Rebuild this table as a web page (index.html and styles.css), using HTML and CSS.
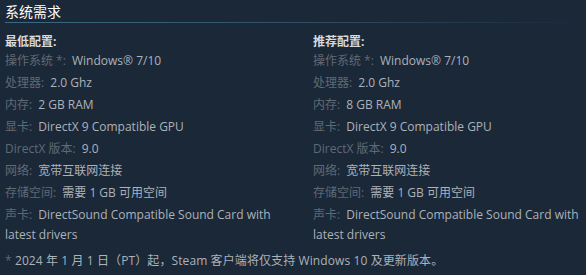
FILE: index.html
```html
<!DOCTYPE html>
<html lang="zh-CN">
<head>
<meta charset="utf-8">
<title>系统需求</title>
<link rel="stylesheet" href="styles.css">
</head>
<body>
<div class="sysreq">
  <h2 class="title">系统需求</h2>
  <div class="rule"></div>
  <div class="cols">
    <div class="col">
      <div class="head">最低配置:</div>
      <ul class="list">
        <li><span class="lbl">操作系统 *:</span> Windows® 7/10</li>
        <li><span class="lbl">处理器:</span> 2.0 Ghz</li>
        <li><span class="lbl">内存:</span> 2 GB RAM</li>
        <li><span class="lbl">显卡:</span> DirectX 9 Compatible GPU</li>
        <li><span class="lbl">DirectX 版本:</span> 9.0</li>
        <li><span class="lbl">网络:</span> 宽带互联网连接</li>
        <li><span class="lbl">存储空间:</span> 需要 1 GB 可用空间</li>
        <li><span class="lbl">声卡:</span> DirectSound Compatible Sound Card with latest drivers</li>
      </ul>
    </div>
    <div class="col">
      <div class="head">推荐配置:</div>
      <ul class="list">
        <li><span class="lbl">操作系统 *:</span> Windows® 7/10</li>
        <li><span class="lbl">处理器:</span> 2.0 Ghz</li>
        <li><span class="lbl">内存:</span> 8 GB RAM</li>
        <li><span class="lbl">显卡:</span> DirectX 9 Compatible GPU</li>
        <li><span class="lbl">DirectX 版本:</span> 9.0</li>
        <li><span class="lbl">网络:</span> 宽带互联网连接</li>
        <li><span class="lbl">存储空间:</span> 需要 1 GB 可用空间</li>
        <li><span class="lbl">声卡:</span> DirectSound Compatible Sound Card with latest drivers</li>
      </ul>
    </div>
  </div>
  <div class="note"><span class="ast">*</span> 2024 年 1 月 1 日（PT）起，Steam 客户端将仅支持 Windows 10 及更新版本。</div>
</div>
</body>
</html>
```
FILE: styles.css
```css
html, body {
  margin: 0;
  padding: 0;
  background: #1b2838;
}
body {
  font-family: "Open Sans", "Liberation Sans", "Noto Sans CJK SC", sans-serif;
  font-size: 12px;
  color: #acb2b8;
}
.sysreq {
  padding-left: 5px;
}
.title {
  margin: 0;
  font-size: 14px;
  font-weight: normal;
  line-height: 22px;
  color: #ffffff;
  font-family: "Noto Sans CJK SC", sans-serif;
}
.rule {
  height: 1px;
  background: linear-gradient(to right, #3a6a86 0%, #2f5068 50%, #1b2838 100%);
}
.cols {
  display: grid;
  grid-template-columns: 290px 1fr;
  column-gap: 18px;
  margin-top: 10px;
}
.head {
  line-height: 18px;
  color: #d6dadd;
  font-weight: bold;
}
.list {
  list-style: none;
  margin: 0;
  padding: 0;
}
.list li {
  line-height: 20px;
  margin-bottom: 2px;
}
.lbl {
  color: #5f6a75;
  margin-right: 3px;
}
.note {
  margin-top: 4px;
  line-height: 20px;
  letter-spacing: 0.1px;
}
.ast {
  color: #5f6a75;
}
```
